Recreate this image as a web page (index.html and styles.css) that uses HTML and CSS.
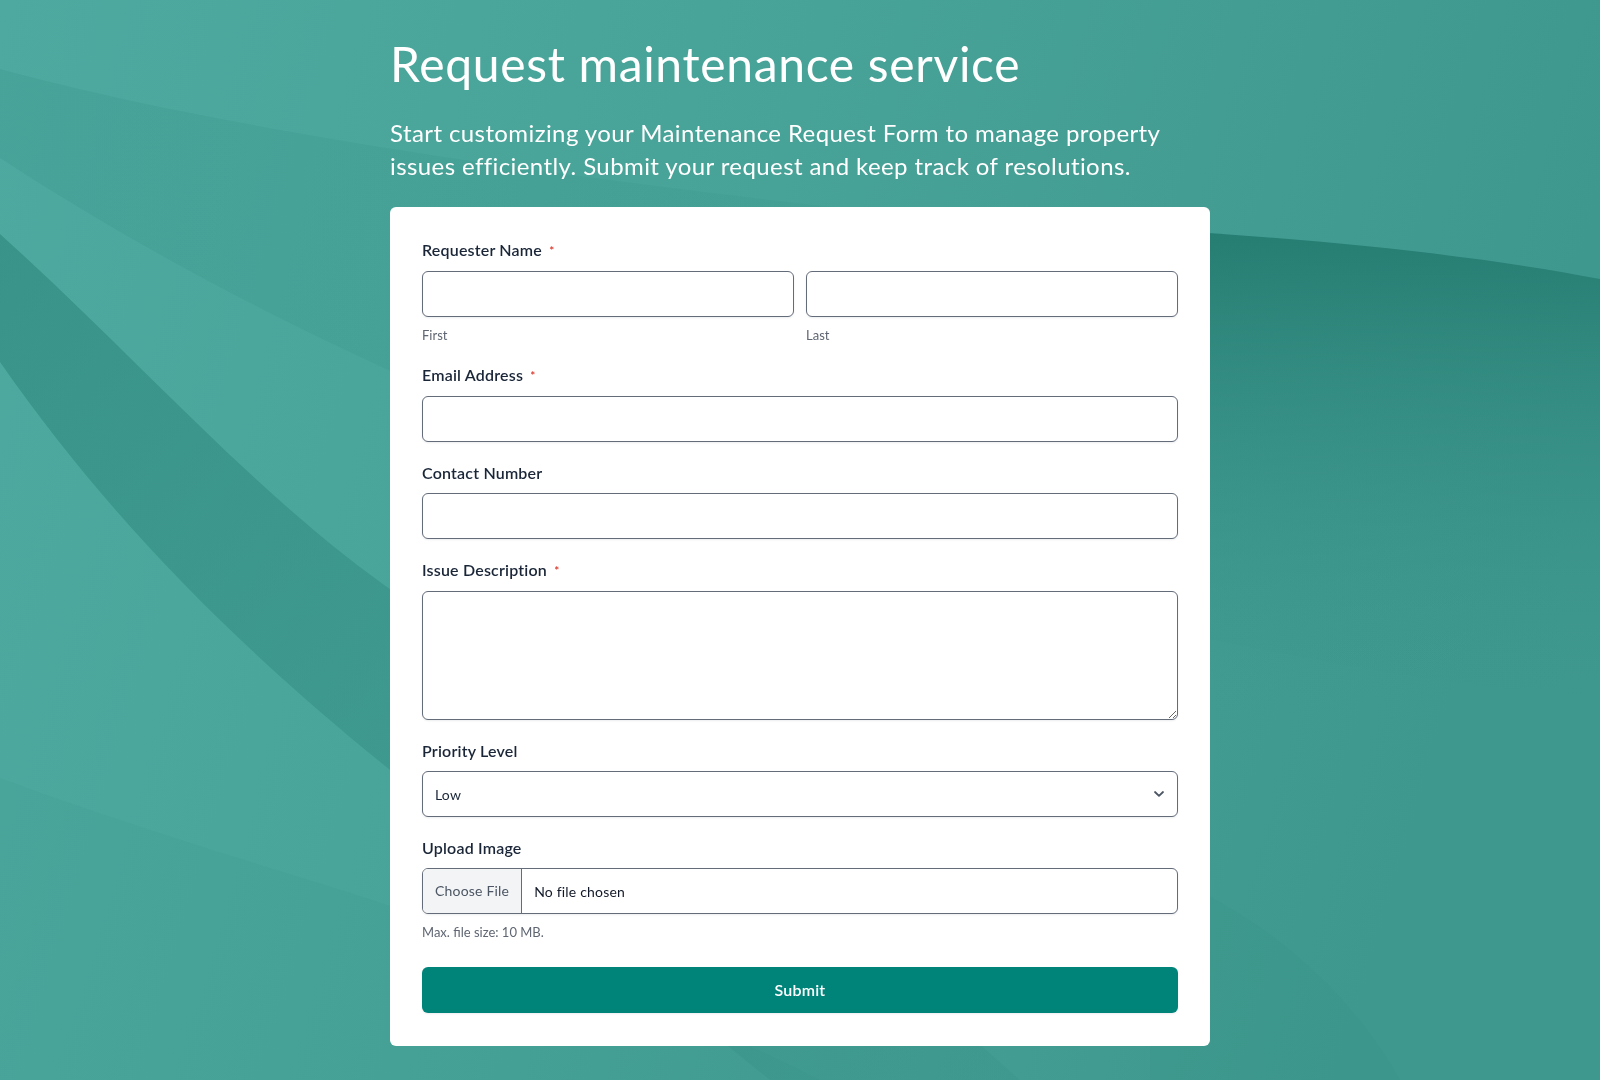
FILE: index.html
```html
<!DOCTYPE html>
<html lang="en">
<head>
<meta charset="utf-8">
<title>Request maintenance service</title>
<link rel="stylesheet" href="styles.css">
</head>
<body>
<svg class="bg-waves" viewBox="0 0 1600 1080" preserveAspectRatio="none" aria-hidden="true">
  <defs>
    <linearGradient id="base" x1="0" y1="0" x2="1" y2="0.2">
      <stop offset="0" stop-color="#4eaaa0"/>
      <stop offset="0.5" stop-color="#47a297"/>
      <stop offset="1" stop-color="#3f988e"/>
    </linearGradient>
    <linearGradient id="bandAB" x1="0" y1="0" x2="1" y2="0">
      <stop offset="0" stop-color="#2f8a80" stop-opacity="0.2"/>
      <stop offset="0.6" stop-color="#2f8a80" stop-opacity="0.12"/>
      <stop offset="1" stop-color="#2f8a80" stop-opacity="0"/>
    </linearGradient>
    <linearGradient id="rightDark" x1="0" y1="0" x2="0" y2="1">
      <stop offset="0" stop-color="#237a6f" stop-opacity="0.95"/>
      <stop offset="1" stop-color="#3f998f" stop-opacity="0"/>
    </linearGradient>
    <linearGradient id="bandCD" x1="0" y1="0" x2="1" y2="1">
      <stop offset="0" stop-color="#318a80" stop-opacity="0.7"/>
      <stop offset="1" stop-color="#3a948a" stop-opacity="0.4"/>
    </linearGradient>
  </defs>
  <rect x="0" y="0" width="1600" height="1080" fill="url(#base)"/>
  <path d="M0,69 C300,150 800,215 1600,279 L1600,700 C1000,640 400,420 0,158 Z" fill="url(#bandAB)"/>
  <path d="M1000,222 C1250,232 1450,250 1600,279 L1600,720 L1000,720 Z" fill="url(#rightDark)"/>
  <path d="M0,234 C140,360 260,500 400,596 C620,760 820,900 1020,1080 L770,1080 C620,960 520,870 400,778 C240,650 110,520 0,362 Z" fill="url(#bandCD)"/>
  <path d="M0,778 C140,830 280,870 400,909 C560,960 700,1020 820,1080 L0,1080 Z" fill="#2f8a80" fill-opacity="0.1"/>
  <path d="M1150,870 C1260,910 1350,990 1400,1080 L1150,1080 Z" fill="#2f8a80" fill-opacity="0.15"/>
</svg>

<main class="page">
  <header class="intro">
    <h1 class="title">Request maintenance service</h1>
    <p class="subtitle">Start customizing your Maintenance Request Form to manage property issues efficiently. Submit your request and keep track of resolutions.</p>
  </header>

  <form class="card">
    <div class="field">
      <div class="label">Requester Name <span class="req">*</span></div>
      <div class="name-row">
        <div class="name-col">
          <input class="input" type="text" aria-label="First">
          <div class="sublabel">First</div>
        </div>
        <div class="name-col">
          <input class="input" type="text" aria-label="Last">
          <div class="sublabel">Last</div>
        </div>
      </div>
    </div>

    <div class="field">
      <label class="label">Email Address <span class="req">*</span></label>
      <input class="input" type="email">
    </div>

    <div class="field">
      <label class="label">Contact Number</label>
      <input class="input" type="tel">
    </div>

    <div class="field">
      <label class="label">Issue Description <span class="req">*</span></label>
      <textarea class="input textarea"></textarea>
    </div>

    <div class="field">
      <label class="label">Priority Level</label>
      <div class="select-wrap">
        <select class="input select">
          <option>Low</option>
          <option>Medium</option>
          <option>High</option>
        </select>
        <svg class="chevron" width="12" height="8" viewBox="0 0 12 8" aria-hidden="true"><path d="M2 2 L6 5.8 L10 2" fill="none" stroke="#4b5563" stroke-width="1.8" stroke-linecap="round" stroke-linejoin="round"/></svg>
      </div>
    </div>

    <div class="field">
      <label class="label">Upload Image</label>
      <input class="file-input" type="file" accept="image/*">
      <div class="sublabel">Max. file size: 10 MB.</div>
    </div>

    <button class="submit" type="button">Submit</button>
  </form>
</main>
</body>
</html>
```

FILE: styles.css
```css
html, body {
  margin: 0;
  padding: 0;
}

body {
  min-height: 1080px;
  font-family: Lato, "Liberation Sans", sans-serif;
  letter-spacing: 0.012em;
  background: #47a297;
  color: #1a2638;
}

.bg-waves {
  position: fixed;
  top: 0;
  left: 0;
  width: 100%;
  height: 100%;
  z-index: 0;
}

.page {
  position: relative;
  z-index: 1;
  width: 820px;
  margin: 0 auto;
  padding-top: 35px;
  padding-bottom: 35px;
}

.intro {
  color: #ffffff;
}

.title {
  margin: 0;
  font-size: 48px;
  line-height: 57.6px;
  font-weight: 400;
  letter-spacing: 0.014em;
}

.subtitle {
  margin: 23px 0 25px;
  font-size: 24px;
  line-height: 33px;
  font-weight: 400;
  letter-spacing: 0.017em;
}

.card {
  background: #ffffff;
  border-radius: 6px;
  padding: 32px 32px 33px;
  display: flex;
  flex-direction: column;
}

.field {
  display: flex;
  flex-direction: column;
  margin-bottom: 20px;
}

.label {
  font-size: 16px;
  line-height: 22px;
  font-weight: 600;
  color: #1a2638;
  margin-bottom: 9px;
}

.req {
  color: #d92d20;
  font-size: 12px;
  margin-left: 3px;
  vertical-align: 1px;
}

.name-row {
  display: flex;
  gap: 12px;
}

.name-col {
  flex: 1;
  display: flex;
  flex-direction: column;
}

.sublabel {
  margin-top: 9px;
  font-size: 13px;
  line-height: 18px;
  letter-spacing: 0;
  color: #5f6672;
}

.input {
  box-sizing: border-box;
  width: 100%;
  height: 46px;
  border: 1px solid #646c7a;
  border-radius: 6px;
  background: #ffffff;
  font-family: inherit;
  font-size: 14px;
  letter-spacing: inherit;
  color: #1a2638;
  padding: 0 12px;
  box-shadow: 0 1px 2px rgba(16, 24, 40, 0.08);
  outline: none;
  margin: 0;
}

.textarea {
  height: 129px;
  padding: 10px 12px;
  resize: vertical;
}

.select-wrap {
  position: relative;
}

.select {
  appearance: none;
  -webkit-appearance: none;
  padding-top: 2px;
  cursor: pointer;
}

.chevron {
  position: absolute;
  right: 13px;
  top: 19px;
  pointer-events: none;
}

.file-input {
  box-sizing: border-box;
  width: 100%;
  height: 46px;
  border: 1px solid #646c7a;
  border-radius: 6px;
  background: #ffffff;
  font-family: inherit;
  font-size: 14px;
  letter-spacing: inherit;
  color: #111827;
  padding: 0;
  overflow: hidden;
  box-shadow: 0 1px 2px rgba(16, 24, 40, 0.08);
  margin: 0;
}

.file-input::file-selector-button {
  height: 44px;
  padding: 0 12px;
  margin: 0 12px 0 0;
  border: none;
  border-right: 1px solid #646c7a;
  background: #f3f4f6;
  color: #4b5563;
  font-family: inherit;
  font-size: 14px;
  letter-spacing: inherit;
}

.submit {
  margin-top: 6px;
  height: 46px;
  border: none;
  border-radius: 6px;
  background: #00847a;
  color: #ffffff;
  font-family: inherit;
  font-size: 16px;
  font-weight: 600;
  letter-spacing: inherit;
  cursor: pointer;
  box-shadow: 0 1px 2px rgba(16, 24, 40, 0.08);
}
```
